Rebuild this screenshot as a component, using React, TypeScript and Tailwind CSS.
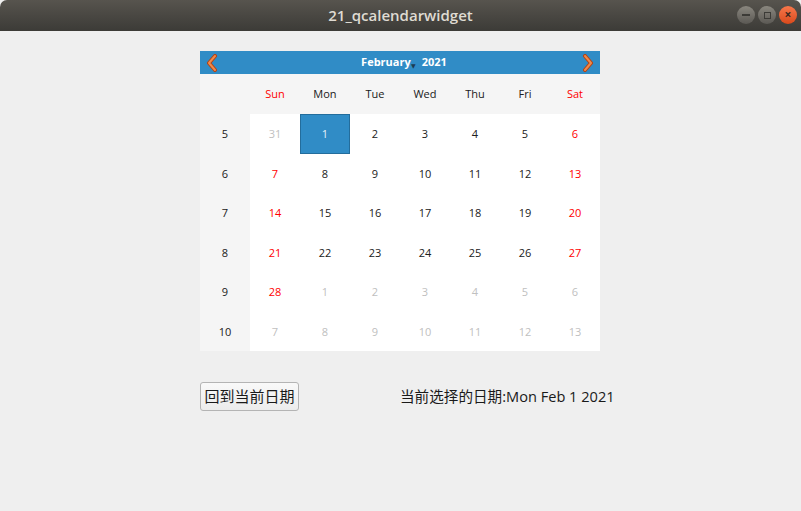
import { useState } from "react";

const font = { fontFamily: '"Open Sans", "DejaVu Sans", "Noto Sans CJK SC", sans-serif' };

const days = ["Sun", "Mon", "Tue", "Wed", "Thu", "Fri", "Sat"];

// weeks of Feb 2021 as shown by QCalendarWidget
const weeks = [
  { no: 5, start: [2021, 0, 31] },
  { no: 6, start: [2021, 1, 7] },
  { no: 7, start: [2021, 1, 14] },
  { no: 8, start: [2021, 1, 21] },
  { no: 9, start: [2021, 1, 28] },
  { no: 10, start: [2021, 2, 7] },
];

const monthNames = ["Jan", "Feb", "Mar", "Apr", "May", "Jun", "Jul", "Aug", "Sep", "Oct", "Nov", "Dec"];

const Chevron = ({ dir }: { dir: "left" | "right" }) => (
  <svg width="12" height="18" viewBox="0 0 12 18">
    <path
      d={dir === "left" ? "M9 2 L3 9 L9 16" : "M3 2 L9 9 L3 16"}
      fill="none"
      stroke="#b8410f"
      strokeWidth="4"
      strokeLinecap="round"
      strokeLinejoin="round"
    />
    <path
      d={dir === "left" ? "M9 2 L3 9 L9 16" : "M3 2 L9 9 L3 16"}
      fill="none"
      stroke="#f08a4b"
      strokeWidth="2"
      strokeLinecap="round"
      strokeLinejoin="round"
    />
  </svg>
);

const TitleBar = () => (
  <div className="relative h-[31px] rounded-t-[7px] bg-gradient-to-b from-[#57544e] to-[#3c3b37] flex items-center justify-center">
    <span className="text-[15px] font-semibold text-[#dfdbd2]" style={{ fontFamily: '"Open Sans", sans-serif' }}>
      21_qcalendarwidget
    </span>
    <div className="absolute right-[4px] top-[6px] flex gap-[3px]">
      <div className="w-[18px] h-[18px] rounded-full bg-gradient-to-b from-[#8a877f] to-[#5b5954] flex items-center justify-center">
        <div className="w-[8px] h-[1.5px] bg-[#3c3b37]" />
      </div>
      <div className="w-[18px] h-[18px] rounded-full bg-gradient-to-b from-[#8a877f] to-[#5b5954] flex items-center justify-center">
        <div className="w-[7px] h-[7px] border border-[#3c3b37]" />
      </div>
      <div className="w-[18px] h-[18px] rounded-full bg-gradient-to-b from-[#f7774a] to-[#d9491a] flex items-center justify-center text-[#3c2a20] text-[12px] leading-none font-bold">
        ×
      </div>
    </div>
  </div>
);

export default function App() {
  const [selected, setSelected] = useState({ y: 2021, m: 1, d: 1 });

  const dayName = days[new Date(selected.y, selected.m, selected.d).getDay()];

  return (
    <div className="w-[801px] h-[511px] bg-[#efefef] overflow-hidden" style={font}>
      <TitleBar />
      <div className="pl-[200px] pt-[20px]">
        <div className="w-[400px]">
          <div className="h-[23px] bg-[#308cc6] flex items-center justify-between px-[6px]">
            <Chevron dir="left" />
            <div className="flex items-center gap-[11px] text-white text-[11px] font-bold pl-[8px]">
              <span className="relative">
                February
                <span className="absolute -right-[5px] bottom-[0px] text-[6px] text-[#1d3b52]">▼</span>
              </span>
              <span>2021</span>
            </div>
            <Chevron dir="right" />
          </div>
          <div className="grid grid-cols-8 bg-[#f5f5f5] text-[11px]">
            <div className="h-[40px]" />
            {days.map((d, i) => (
              <div
                key={d}
                className={`h-[40px] pt-[1px] flex items-center justify-center ${i === 0 || i === 6 ? "text-[#ff0000]" : "text-[#202020]"}`}
              >
                {d}
              </div>
            ))}
          </div>
          {weeks.map((w) => (
            <div key={w.no} className="grid grid-cols-8 text-[11px] h-[39.5px]">
              <div className="bg-[#f5f5f5] pt-[1px] flex items-center justify-center text-[#202020]">{w.no}</div>
              {days.map((_, i) => {
                const dt = new Date(w.start[0], w.start[1], w.start[2] + i);
                const inMonth = dt.getMonth() === 1;
                const isSel = dt.getFullYear() === selected.y && dt.getMonth() === selected.m && dt.getDate() === selected.d;
                const weekend = i === 0 || i === 6;
                let cls = "bg-white ";
                if (isSel) cls = "bg-[#308cc6] border border-[#236d9c] text-[#e6f2fa] ";
                else if (!inMonth) cls += "text-[#c0c0c0]";
                else if (weekend) cls += "text-[#ff0000]";
                else cls += "text-[#202020]";
                return (
                  <div
                    key={i}
                    onClick={() => setSelected({ y: dt.getFullYear(), m: dt.getMonth(), d: dt.getDate() })}
                    className={`pt-[1px] flex items-center justify-center ${cls}`}
                  >
                    {dt.getDate()}
                  </div>
                );
              })}
            </div>
          ))}
        </div>
        <div className="flex items-center mt-[31px]">
          <button
            onClick={() => setSelected({ y: 2021, m: 1, d: 1 })}
            className="h-[29px] w-[99px] rounded-[3px] border border-[#b4b4b4] bg-gradient-to-b from-[#f9f9f9] to-[#ececec] text-[15px] text-[#1a1a1a] flex items-center justify-center"
          >
            回到当前日期
          </button>
          <span className="ml-[101px] text-[14.6px] text-[#1a1a1a] pt-[1px]">
            当前选择的日期:{dayName} {monthNames[selected.m]} {selected.d} {selected.y}
          </span>
        </div>
      </div>
    </div>
  );
}
